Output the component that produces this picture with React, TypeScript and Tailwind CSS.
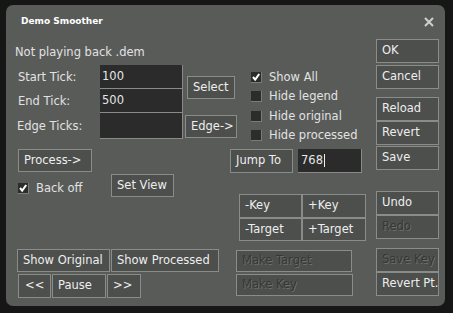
import React from "react";

const FONT = { fontFamily: '"DejaVu Sans", Verdana, sans-serif' };

type BtnProps = {
  label: string;
  className?: string;
  disabled?: boolean;
};

const Btn = ({ label, className = "", disabled = false }: BtnProps) => (
  <div
    className={`flex items-center shrink-0 overflow-hidden whitespace-nowrap border border-[#8a8c8a] bg-[#4d4f4d] pl-[5px] text-[11.5px] leading-none ${
      disabled
        ? "text-[#363836] [text-shadow:1px_1px_0_#6c6e6c]"
        : "text-[#eeeeee]"
    } ${className}`}
  >
    {label}
  </div>
);

const Check = ({ checked = false }: { checked?: boolean }) => (
  <div className="w-[11px] h-[11px] shrink-0 bg-[#2b2d2b] border-r border-b border-[#7a7c7a]">
    {checked && (
      <svg width="10" height="10" viewBox="0 0 10 10">
        <polyline
          points="2,5 4.2,7.6 8.2,2"
          fill="none"
          stroke="#ffffff"
          strokeWidth="2"
        />
      </svg>
    )}
  </div>
);

const CheckRow = ({
  label,
  checked,
  className = "",
}: {
  label: string;
  checked?: boolean;
  className?: string;
}) => (
  <div className={`flex items-center gap-[7px] h-[11px] ${className}`}>
    <Check checked={checked} />
    <span className="text-[11.5px] leading-[15px] text-[#e2e2e2] whitespace-nowrap">
      {label}
    </span>
  </div>
);

const Field = ({
  value,
  caret = false,
  className = "",
}: {
  value?: string;
  caret?: boolean;
  className?: string;
}) => (
  <div
    className={`flex items-center shrink-0 bg-[#2b2b2b] border-r border-b border-[#8a8a8a] pl-[2px] text-[11.5px] leading-none text-[#e6e6e6] ${className}`}
  >
    {value}
    {caret && <span className="ml-[1px] w-[1px] h-[13px] bg-[#f0f0f0]" />}
  </div>
);

const tickRows = [
  { label: "Start Tick:", value: "100", h: "h-[24px]", pl: "pl-[3px]" },
  { label: "End Tick:", value: "500", h: "h-[24px]", pl: "pl-[3px]" },
  { label: "Edge Ticks:", value: "", h: "h-[26px]", pl: "pl-[2px]" },
];

export default function App() {
  return (
    <div
      className="w-[453px] h-[313px] bg-[#161616] pt-[5px] pl-[6px] overflow-hidden"
      style={FONT}
    >
      <div className="w-[439px] h-[301px] rounded-[7px] bg-[#595b59] flex flex-col">
        {/* title bar */}
        <div className="h-[34px] flex justify-between items-start">
          <span className="pl-[15px] pt-[11px] text-[9px] leading-[11px] font-bold text-white">
            Demo Smoother
          </span>
          <svg width="10" height="10" viewBox="0 0 10 10" className="mt-[12px] mr-[11px]">
            <path d="M1 1 L9 9 M9 1 L1 9" stroke="#cfcfcf" strokeWidth="2" />
          </svg>
        </div>

        <div className="flex">
          {/* main area */}
          <div className="w-[370px] pl-[9px] flex flex-col">
            <div className="mt-[6px] h-[15px] text-[11.5px] leading-[15px] text-[#e2e2e2]">
              Not playing back .dem
            </div>

            <div className="mt-[5px] flex items-start">
              <div className="flex flex-col">
                {tickRows.map((row) => (
                  <div key={row.label} className="flex items-center">
                    <span className={`w-[85px] ${row.pl} text-[11.5px] leading-[15px] text-[#e2e2e2]`}>
                      {row.label}
                    </span>
                    <Field value={row.value} className={`w-[83px] ${row.h}`} />
                  </div>
                ))}
              </div>
              <div className="ml-[2px] w-[52px] flex flex-col">
                <Btn label="Select" className="ml-[2px] mt-[11px] w-[48px] h-[23px]" />
                <Btn label="Edge->" className="mt-[16px] w-[52px] h-[23px]" />
              </div>
              <div className="ml-[14px] mt-[7px] flex flex-col">
                <CheckRow label="Show All" checked />
                <CheckRow label="Hide legend" className="mt-[8px]" />
                <CheckRow label="Hide original" className="mt-[9px]" />
                <CheckRow label="Hide processed" className="mt-[8px]" />
              </div>
            </div>

            <div className="mt-[8px] flex items-start">
              <Btn label="Process->" className="ml-[3px] w-[74px] h-[23px]" />
              <Btn label="Jump To" className="ml-[138px] w-[63px] h-[24px]" />
              <Field value="768" caret className="ml-[5px] w-[64px] h-[24px] pl-[3px]" />
            </div>

            <div className="flex items-start">
              <div className="w-[224px] flex items-start">
                <CheckRow label="Back off" checked className="ml-[3px] mt-[10px] w-[93px]" />
                <Btn label="Set View" className="mt-[1px] w-[63px] h-[23px]" />
              </div>
              <div className="mt-[21px] grid grid-cols-[63px_64px]">
                <Btn label="-Key" className="h-[24px]" />
                <Btn label="+Key" className="h-[24px]" />
                <Btn label="-Target" className="h-[23px]" />
                <Btn label="+Target" className="h-[23px]" />
              </div>
            </div>

            <div className="mt-[8px] flex items-start">
              <div className="w-[221px] flex flex-col">
                <div className="flex">
                  <Btn label="Show Original" className="ml-[2px] w-[93px] h-[23px]" />
                  <Btn label="Show Processed" className="ml-[1px] w-[108px] h-[23px]" />
                </div>
                <div className="mt-[2px] flex">
                  <Btn label="<<" className="ml-[3px] w-[33px] h-[24px] pl-[6px]" />
                  <Btn label="Pause" className="ml-[1px] w-[54px] h-[24px]" />
                  <Btn label=">>" className="ml-[1px] w-[34px] h-[24px]" />
                </div>
              </div>
              <div className="flex flex-col">
                <Btn label="Make Target" disabled className="mt-[1px] w-[116px] h-[22px]" />
                <Btn label="Make Key" disabled className="mt-[2px] w-[117px] h-[22px]" />
              </div>
            </div>
          </div>

          {/* right column */}
          <div className="w-[63px] flex flex-col">
            <Btn label="OK" className="h-[24px]" />
            <Btn label="Cancel" className="mt-[2px] h-[24px]" />
            <Btn label="Reload" className="mt-[8px] h-[24px]" />
            <Btn label="Revert" className="h-[24px]" />
            <Btn label="Save" className="mt-[1px] h-[24px]" />
            <Btn label="Undo" className="mt-[21px] h-[24px]" />
            <Btn label="Redo" disabled className="h-[24px]" />
            <Btn label="Save Key" disabled className="mt-[9px] h-[24px]" />
            <Btn label="Revert Pt." className="h-[24px]" />
          </div>
        </div>
      </div>
    </div>
  );
}
